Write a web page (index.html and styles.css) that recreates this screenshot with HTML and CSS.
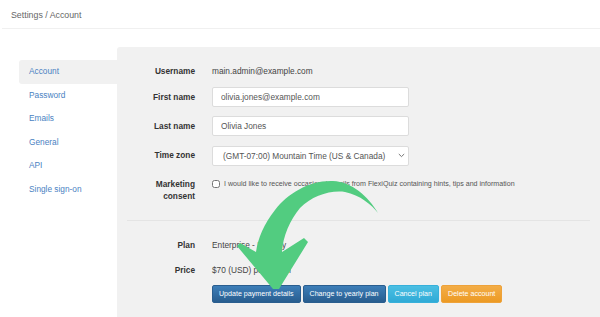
FILE: index.html
```html
<!DOCTYPE html>
<html>
<head>
<meta charset="utf-8">
<link rel="stylesheet" href="styles.css">
</head>
<body>
<div class="header">Settings / Account</div>
<div class="main">
  <nav class="sidebar">
    <a class="nav-item active">Account</a>
    <a class="nav-item">Password</a>
    <a class="nav-item">Emails</a>
    <a class="nav-item">General</a>
    <a class="nav-item">API</a>
    <a class="nav-item">Single sign-on</a>
  </nav>
  <section class="panel">
    <div class="row row-user">
      <div class="label">Username</div>
      <div class="value">main.admin@example.com</div>
    </div>
    <div class="row row-first">
      <div class="label">First name</div>
      <input class="input" type="text" value="olivia.jones@example.com">
    </div>
    <div class="row row-gap">
      <div class="label">Last name</div>
      <input class="input" type="text" value="Olivia Jones">
    </div>
    <div class="row row-gap">
      <div class="label">Time zone</div>
      <div class="select-wrap">
        <select class="input select"><option>(GMT-07:00) Mountain Time (US &amp; Canada)</option></select>
        <svg class="chevron" width="7" height="5" viewBox="0 0 7 5"><path d="M0.8 1 L3.5 3.6 L6.2 1" fill="none" stroke="#666" stroke-width="0.9"/></svg>
      </div>
    </div>
    <div class="row row-consent">
      <div class="label label-multi">Marketing<br>consent</div>
      <label class="consent"><input class="check" type="checkbox"><span>I would like to receive occasional emails from FlexiQuiz containing hints, tips and information</span></label>
    </div>
    <div class="separator"></div>
    <div class="row row-plan">
      <div class="label">Plan</div>
      <div class="value">Enterprise - Monthly</div>
    </div>
    <div class="row row-price">
      <div class="label">Price</div>
      <div class="value">$70 (USD) per month</div>
    </div>
    <div class="buttons">
      <button class="btn btn-primary">Update payment details</button>
      <button class="btn btn-primary">Change to yearly plan</button>
      <button class="btn btn-info">Cancel plan</button>
      <button class="btn btn-warning">Delete account</button>
    </div>
  </section>
</div>
<svg class="arrow" width="600" height="317" viewBox="0 0 600 317">
  <path fill="#52cc80" d="M378,213 C368,196 352,182 333,181 C310,180 288,193 275,210 C264,224 258,238 256,252 L240,243 L237,246 L273,289 L279,289 L308,242 L304,238 L282,252 C283,236 290,220 300,208 C312,196 330,190 345,192 C360,195 372,205 378,213 Z"/>
</svg>
</body>
</html>
```
FILE: styles.css
```css
* { box-sizing: border-box; }
html, body { margin: 0; padding: 0; }
body {
  width: 600px;
  height: 317px;
  overflow: hidden;
  background: #fff;
  font-family: "Liberation Sans", Arial, sans-serif;
  color: #333;
  position: relative;
}
.header {
  height: 29px;
  line-height: 30px;
  padding-left: 9px;
  margin-left: 2px;
  font-size: 8.8px;
  color: #666;
  border-bottom: 1px solid #f0f0f0;
}
.main {
  display: flex;
  margin-top: 18px;
  height: 270px;
}
.sidebar {
  width: 117px;
  padding: 13px 0 0 19px;
  display: flex;
  flex-direction: column;
}
.nav-item {
  display: block;
  height: 23.6px;
  line-height: 23.6px;
  padding-left: 10px;
  font-size: 8.3px;
  color: #4a82c2;
  border-radius: 3px 0 0 3px;
}
.nav-item.active { background: #f1f1f1; }
.panel {
  flex: 1;
  background: #f1f1f1;
  border-top-left-radius: 3px;
  padding-top: 14px;
}
.row {
  display: flex;
  align-items: center;
  height: 20px;
}
.row-first { margin-top: 6px; }
.row-gap { margin-top: 9px; }
.row-consent { margin-top: 13px; height: 24px; align-items: flex-start; }
.row-plan { margin-top: 14px; }
.row-price { margin-top: 5px; }
.label {
  width: 78px;
  text-align: right;
  font-weight: bold;
  font-size: 8.3px;
  color: #333;
  margin-right: 17px;
  flex: none;
}
.label-multi { line-height: 12px; }
.value {
  font-size: 8.3px;
  color: #444;
}
.input {
  width: 197px;
  height: 20px;
  border: 1px solid #dcdcdc;
  border-radius: 2px;
  background: #fff;
  font-family: "Liberation Sans", Arial, sans-serif;
  font-size: 8.3px;
  color: #555;
  padding: 0 8px;
  margin: 0;
  outline: none;
}
.select-wrap {
  position: relative;
  width: 197px;
  height: 20px;
}
.select {
  -webkit-appearance: none;
  appearance: none;
  padding: 0 14px 0 10px;
}
.chevron {
  position: absolute;
  right: 4px;
  top: 8px;
}
.consent {
  display: flex;
  align-items: center;
  height: 12px;
  font-size: 7.1px;
  color: #555;
}
.check {
  width: 8px;
  height: 8px;
  margin: 0 4px 0 0;
}
.separator {
  height: 1px;
  background: #e4e4e4;
  margin: 18px 10px 0 10px;
}
.buttons {
  display: flex;
  gap: 2px;
  margin-top: 5px;
  padding-left: 95px;
}
.btn {
  height: 18px;
  padding: 0 6px;
  font-family: "Liberation Sans", Arial, sans-serif;
  font-size: 7.1px;
  color: #fff;
  border-radius: 2px;
  border: 1px solid;
  margin: 0;
}
.btn-primary {
  background: linear-gradient(#3d7eb8, #285d8f);
  border-color: #2a5e8f;
}
.btn-info {
  background: linear-gradient(#4bbfe3, #30aad6);
  border-color: #37b0da;
}
.btn-warning {
  background: linear-gradient(#f3ad47, #ec9a24);
  border-color: #eea23a;
}
.arrow {
  position: absolute;
  left: 0;
  top: 0;
  pointer-events: none;
}
```
